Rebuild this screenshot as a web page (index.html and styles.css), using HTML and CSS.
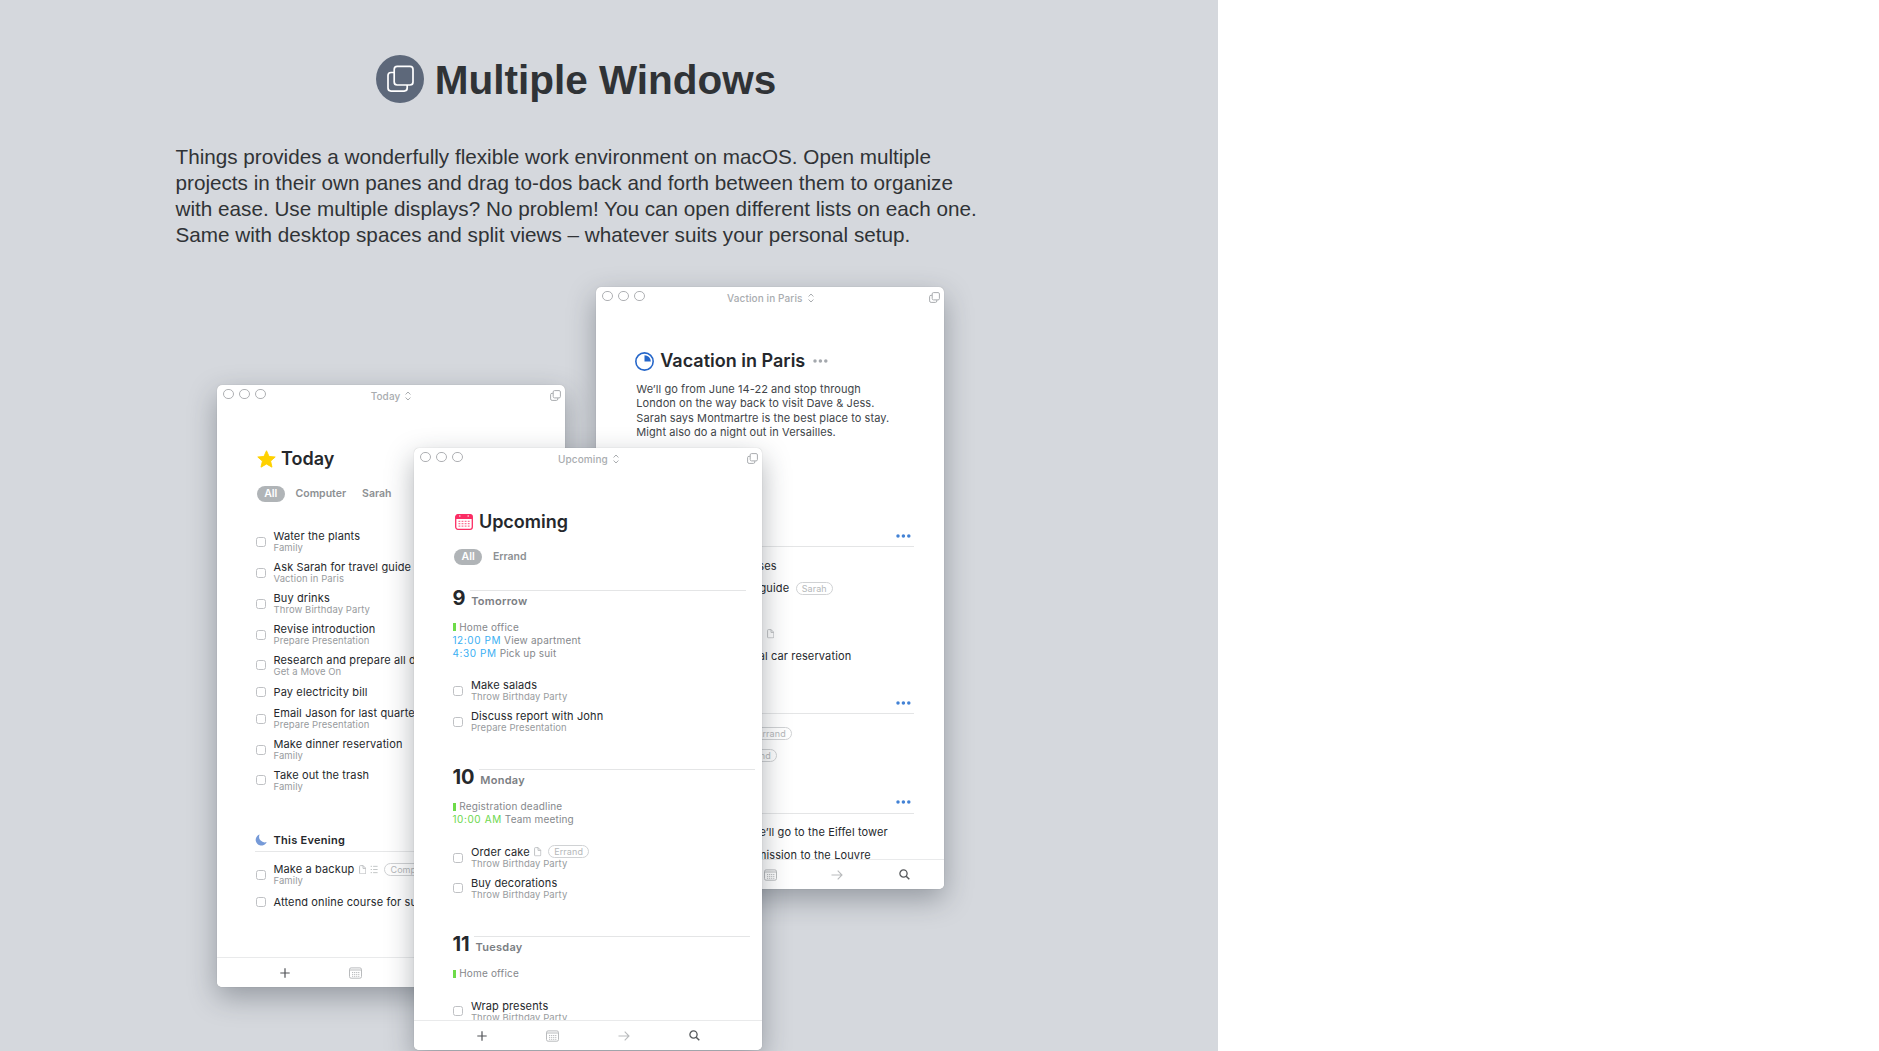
FILE: index.html
```html
<!DOCTYPE html>
<html lang="en">
<head>
<meta charset="utf-8">
<title>Multiple Windows</title>
<link rel="stylesheet" href="styles.css">
</head>
<body>
<svg width="0" height="0" class="defs" aria-hidden="true">
  <symbol id="copy" viewBox="0 0 11 11"><path d="M3.2 3.3H2A1.4 1.4 0 0 0 .6 4.700v4.200A1.500 1.500 0 0 0 2.100 10.400H6.400A1.400 1.400 0 0 0 7.800 9V8" fill="none" stroke="currentColor"/><rect x="3.200" y=".6" width="7.200" height="7.300" rx="1.300" fill="none" stroke="currentColor"/></symbol>
  <symbol id="sort" viewBox="0 0 6 10"><path d="M.6 3.500 3 1l2.400 2.500M.6 6.500 3 9l2.400-2.500" fill="none" stroke="currentColor"/></symbol>
  <symbol id="plus" viewBox="0 0 10 10"><path d="M5 .3v9.400M.3 5h9.400" fill="none" stroke="currentColor" stroke-width="1.200"/></symbol>
  <symbol id="cal" viewBox="0 0 13 12"><rect x=".5" y=".9" width="12" height="10.300" rx="1.600" fill="none" stroke="currentColor"/><path d="M.5 3h12" stroke="currentColor"/><path d="M3 5.500h7.400M3 7.400h7.400M3 9.300h7.400" fill="none" stroke="currentColor" stroke-dasharray="1.200 .85"/></symbol>
  <symbol id="arrow" viewBox="0 0 12 10"><path d="M.5 5H11M6.700.6 11 5 6.700 9.400" fill="none" stroke="currentColor" stroke-width="1.100"/></symbol>
  <symbol id="search" viewBox="0 0 11 11"><circle cx="4.500" cy="4.500" r="3.600" fill="none" stroke="currentColor" stroke-width="1.300"/><path d="m7.200 7.200 3.100 3.100" stroke="currentColor" stroke-width="1.500"/></symbol>
  <symbol id="file" viewBox="0 0 8 10"><path d="M1.500.6h2.900L7.300 3.500v5a.9.9 0 0 1-.9.9H1.500a.9.9 0 0 1-.9-.9v-7a.9.9 0 0 1 .9-.9ZM4.300.6v3h3" fill="none" stroke="currentColor" stroke-width=".9"/></symbol>
  <symbol id="list" viewBox="0 0 8 10"><path d="M.3 1.500h1.500M.3 5h1.500M.3 8.500h1.500M3 1.500h5M3 5h5M3 8.500h5" fill="none" stroke="currentColor" stroke-width=".9"/></symbol>
  <symbol id="dots" viewBox="0 0 15 4"><circle cx="2" cy="2" r="1.750"/><circle cx="7.400" cy="2" r="1.750"/><circle cx="12.800" cy="2" r="1.750"/></symbol>
</svg>

<section class="feature">
  <h1 class="headline">
    <svg class="badge" viewBox="0 0 48 48"><circle cx="24" cy="24" r="24" fill="#5d687a"/><g fill="none" stroke="#fff" stroke-width="1.700"><rect x="18.200" y="11.400" width="18.800" height="18.600" rx="3"/><path d="M18.200 17.500H15a3 3 0 0 0-3 3v12.600a3 3 0 0 0 3 3h13.200a3 3 0 0 0 3-3V30"/></g></svg>
    <span>Multiple Windows</span>
  </h1>
  <p class="intro">Things provides a wonderfully flexible work environment on macOS. Open multiple projects in their own panes and drag to-dos back and forth between them to organize with ease. Use multiple displays? No problem! You can open different lists on each one. Same with desktop spaces and split views – whatever suits your personal setup.</p>

  <article class="window paris">
    <header class="bar"><span class="lights"><i></i><i></i><i></i></span><span class="name">Vaction in Paris <svg class="sort"><use href="#sort"/></svg></span><svg class="copy"><use href="#copy"/></svg></header>
    <div class="body">
      <h2 class="title"><svg class="pie" viewBox="0 0 18 18"><circle cx="9" cy="9" r="8.200" fill="none" stroke="#2566c9" stroke-width="1.500"/><path d="M9 3v6h6a6 6 0 0 0-6-6Z" fill="#2566c9"/></svg><span>Vacation in Paris</span><svg class="dots"><use href="#dots"/></svg></h2>
      <p class="notes">We’ll go from June 14-22 and stop through<br>London on the way back to visit Dave &amp; Jess.<br>Sarah says Montmartre is the best place to stay.<br>Might also do a night out in Versailles.</p>
      <div class="group first"><svg class="dots"><use href="#dots"/></svg></div>
      <ul class="tasks tail">
        <li class="w-a"><b>glasses</b></li>
        <li class="w-b"><b>guide</b><span class="tag">Sarah</span></li>
        <li></li>
        <li class="w-c"><svg class="file"><use href="#file"/></svg></li>
        <li class="w-d"><b>rental car reservation</b></li>
      </ul>
      <div class="group"><svg class="dots"><use href="#dots"/></svg></div>
      <ul class="tasks tail">
        <li class="w-e"><span class="tag">Errand</span></li>
        <li class="w-f"><span class="tag">Errand</span></li>
      </ul>
      <div class="group"><svg class="dots"><use href="#dots"/></svg></div>
      <ul class="tasks tail">
        <li class="w-g"><b>We’ll go to the Eiffel tower</b></li>
        <li class="w-h"><b>Admission to the Louvre</b></li>
      </ul>
    </div>
    <footer class="tools five"><svg class="plus"><use href="#plus"/></svg><svg class="list"><use href="#list"/></svg><svg class="cal"><use href="#cal"/></svg><svg class="arrow"><use href="#arrow"/></svg><svg class="search"><use href="#search"/></svg></footer>
  </article>

  <article class="window today">
    <header class="bar"><span class="lights"><i></i><i></i><i></i></span><span class="name">Today <svg class="sort"><use href="#sort"/></svg></span><svg class="copy"><use href="#copy"/></svg></header>
    <div class="body">
      <h2 class="title"><svg class="star" viewBox="0 0 20 19"><path d="m10 .8 2.700 6 6.500.6-4.900 4.300 1.500 6.400L10 14.800l-5.800 3.300 1.500-6.400L.8 7.400l6.500-.6Z" fill="#ffd100" stroke="#ffd100" stroke-linejoin="round"/></svg><span>Today</span></h2>
      <div class="filters"><span class="on">All</span><span>Computer</span><span>Sarah</span></div>
      <ul class="tasks">
        <li><i></i><div><b>Water the plants</b><small>Family</small></div></li>
        <li><i></i><div><b>Ask Sarah for travel guide</b><small>Vaction in Paris</small></div></li>
        <li><i></i><div><b>Buy drinks</b><small>Throw Birthday Party</small></div></li>
        <li><i></i><div><b>Revise introduction</b><small>Prepare Presentation</small></div></li>
        <li><i></i><div><b>Research and prepare all d</b><small>Get a Move On</small></div></li>
        <li class="single"><i></i><div><b>Pay electricity bill</b></div></li>
        <li><i></i><div><b>Email Jason for last quarter</b><small>Prepare Presentation</small></div></li>
        <li><i></i><div><b>Make dinner reservation</b><small>Family</small></div></li>
        <li><i></i><div><b>Take out the trash</b><small>Family</small></div></li>
      </ul>
      <h3 class="evening"><svg viewBox="0 0 12 12"><path d="M4.600.5A5.700 5.700 0 1 0 11.700 8 5.600 5.600 0 0 1 4.600.5Z" fill="#769ad8"/></svg>This Evening</h3>
      <ul class="tasks">
        <li><i></i><div><b>Make a backup<svg class="file"><use href="#file"/></svg><svg class="list"><use href="#list"/></svg><span class="tag">Computer</span></b><small>Family</small></div></li>
        <li class="single"><i></i><div><b>Attend online course for su</b></div></li>
      </ul>
    </div>
    <footer class="tools"><svg class="plus"><use href="#plus"/></svg><svg class="cal"><use href="#cal"/></svg><svg class="arrow"><use href="#arrow"/></svg><svg class="search"><use href="#search"/></svg></footer>
  </article>

  <article class="window upcoming">
    <header class="bar"><span class="lights"><i></i><i></i><i></i></span><span class="name">Upcoming <svg class="sort"><use href="#sort"/></svg></span><svg class="copy"><use href="#copy"/></svg></header>
    <div class="body">
      <h2 class="title"><svg class="month" viewBox="0 0 18 16"><rect x=".7" y=".7" width="16.600" height="14.600" rx="2.200" fill="#fff" stroke="#fb2d64" stroke-width="1.300"/><path d="M.7 5V2.500A2 2 0 0 1 2.700.5h12.600a2 2 0 0 1 2 2V5Z" fill="#fb2d64"/><path d="M4 2h1.500M12.500 2H14" stroke="#fff"/><path d="M3.500 7.300h11.500M3.500 9.700h11.500M3.500 12.100h11.500" stroke="#fb7296" stroke-width="1.200" stroke-dasharray="1.800 1.300"/></svg><span>Upcoming</span></h2>
      <div class="filters"><span class="on">All</span><span>Errand</span></div>
      <div class="day"><strong>9</strong><span>Tomorrow</span></div>
      <ul class="events">
        <li class="all">Home office</li>
        <li><time>12:00 PM</time> View apartment</li>
        <li><time>4:30 PM</time> Pick up suit</li>
      </ul>
      <ul class="tasks">
        <li><i></i><div><b>Make salads</b><small>Throw Birthday Party</small></div></li>
        <li><i></i><div><b>Discuss report with John</b><small>Prepare Presentation</small></div></li>
      </ul>
      <div class="day"><strong>10</strong><span>Monday</span></div>
      <ul class="events">
        <li class="all">Registration deadline</li>
        <li><time class="green">10:00 AM</time> Team meeting</li>
      </ul>
      <ul class="tasks">
        <li><i></i><div><b>Order cake<svg class="file"><use href="#file"/></svg><span class="tag">Errand</span></b><small>Throw Birthday Party</small></div></li>
        <li><i></i><div><b>Buy decorations</b><small>Throw Birthday Party</small></div></li>
      </ul>
      <div class="day"><strong>11</strong><span>Tuesday</span></div>
      <ul class="events"><li class="all">Home office</li></ul>
      <ul class="tasks">
        <li><i></i><div><b>Wrap presents</b><small>Throw Birthday Party</small></div></li>
      </ul>
    </div>
    <footer class="tools"><svg class="plus"><use href="#plus"/></svg><svg class="cal"><use href="#cal"/></svg><svg class="arrow"><use href="#arrow"/></svg><svg class="search"><use href="#search"/></svg></footer>
  </article>
</section>
</body>
</html>
```
FILE: styles.css
```css
* { box-sizing: border-box; }
body { margin: 0; background: #fff; overflow: hidden; }
ul, h1, h2, h3, p { margin: 0; padding: 0; list-style: none; }
svg { display: block; flex: none; }
.defs { position: absolute; }

.feature {
  position: relative;
  width: 1218px;
  height: 1051px;
  padding: 55px 66px 0 0;
  overflow: hidden;
  background: #d5d8dd;
  color: #303336;
  font-family: "Liberation Sans", Arial, sans-serif;
}
.headline { display: flex; justify-content: center; align-items: center; gap: 11px; height: 48px; font-size: 40.5px; line-height: 48px; }
.headline span { padding-top: 2px; }
.badge { width: 48px; height: 48px; }
.intro { width: 812px; margin: 41px 0 0 175.5px; font-size: 20.7px; line-height: 26px; }

/* Desktop windows */
.window {
  position: absolute;
  display: flex;
  flex-direction: column;
  width: 348px;
  height: 602px;
  overflow: hidden;
  border-radius: 5px;
  background: #fff;
  box-shadow: 0 0 1px rgba(0,0,0,.25), 0 10px 28px rgba(35,45,55,.36);
  font-family: Inter, "Liberation Sans", sans-serif;
  color: #25282c;
}
.paris { left: 596.300px; top: 287px; }
.today { left: 217px; top: 385px; }
.upcoming { left: 414.400px; top: 448px; }

.bar { display: grid; grid-template-columns: 60px 1fr 60px; height: 21.500px; flex: none; align-items: center; color: #a9acaf; }
.lights { display: flex; gap: 5.500px; padding: 0 0 3.500px 6px; }
.lights i { width: 10.500px; height: 10.500px; border: 1px solid #aeb0b3; border-radius: 50%; }
.name { display: flex; justify-content: center; align-items: center; gap: 5px; font-size: 10px; font-weight: 500; letter-spacing: .1px; }
.sort { width: 6px; height: 10px; }
.copy { width: 11px; height: 11px; justify-self: end; margin-right: 4.500px; }

.body { flex: 1; min-height: 0; overflow: hidden; padding: 41.500px 0 0 39px; }
.title { display: flex; align-items: center; height: 22px; font-size: 18px; font-weight: 600; line-height: 22px; white-space: nowrap; }
.pie { width: 19px; height: 19px; margin-right: 6px; }
.star { width: 19px; height: 18px; margin: 0 5px 1px 1px; }
.month { width: 18px; height: 16px; margin: 0 5.500px 0 2px; }
.dots { width: 15px; height: 4px; fill: #4282d5; }
.title .dots { margin-left: 8px; fill: #a4a8ad; }

.filters { display: flex; gap: 11px; margin: 16px 0 0 1px; height: 16px; align-items: center; font-size: 10.500px; font-weight: 600; line-height: 15.500px; color: #8d9093; }
.filters span + span + span { margin-left: 5px; }
.filters .on { width: 27.500px; text-align: center; border-radius: 8px; background: #b0b4b7; color: #fff; }

.tasks li { display: flex; align-items: center; height: 30.800px; white-space: nowrap; }
.tasks .single, .tail li { height: 22.700px; }
.tasks i { flex: none; width: 10px; height: 10px; margin-right: 7.500px; border: 1px solid #bfc1c4; border-radius: 2.500px; }
.tasks b { display: flex; align-items: center; height: 12px; font-size: 11px; font-weight: 400; line-height: 12px; letter-spacing: .13px; }
.tasks small { display: block; font-size: 9.500px; line-height: 11.600px; letter-spacing: .08px; color: #989b9e; }
.file { width: 7.500px; height: 9.500px; margin-left: 4.500px; color: #b5b8ba; }
.list { width: 8px; height: 9px; margin-left: 3.500px; color: #b5b8ba; }
.tag { margin-left: 6.500px; padding: 0 5px; height: 13px; border: 1px solid #d0d2d4; border-radius: 7px; font-size: 9px; line-height: 11px; letter-spacing: .1px; color: #b5b8ba; }

.today .tasks:first-of-type { margin-top: 24.800px; }
.evening { display: flex; align-items: center; gap: 6.500px; height: 24px; margin: 32.500px 0 7.500px -1px; border-bottom: 1px solid #e6e7e8; font-size: 11px; font-weight: 600; letter-spacing: .28px; }
.evening svg { width: 12px; height: 12px; }

.upcoming .filters { margin-bottom: 25px; }
.day { display: flex; height: 31px; margin: 32.200px 0 0 -1px; }
.filters + .day { margin-top: 0; }
.day strong { padding-top: 1px; font-size: 20px; line-height: 15px; font-weight: 700; margin-right: 4.800px; }
.day span { flex: none; width: 276px; padding: 4px 0 0 1px; border-top: 1px solid #e4e5e6; font-size: 11px; font-weight: 600; line-height: 12px; letter-spacing: .27px; color: #7b7e83; }
.events { margin: 0 0 16px -1px; font-size: 10px; line-height: 12.900px; letter-spacing: .18px; color: #85888c; }
.events .all { display: flex; align-items: center; gap: 3px; height: 12.900px; }
.events .all::before { content: ""; width: 2.800px; height: 8px; margin-left: 1px; background: #6edb48; }
time { color: #3aaff3; letter-spacing: .6px; }
.green { color: #6cd74d; }

.notes { margin: 9.500px 0 0 1px; font-size: 11px; line-height: 14.600px; letter-spacing: .07px; color: #414549; white-space: nowrap; }
.group { display: flex; justify-content: flex-end; align-items: flex-end; width: 279px; height: 46.700px; margin-bottom: 7.300px; padding: 0 3px 8.500px 0; border-bottom: 1px solid #e4e5e6; }
.group.first { margin-top: 60.500px; }
.tail li { justify-content: flex-end; }
.w-a { width: 141.500px; }
.w-b { width: 197.500px; }
.w-c { width: 139px; }
.w-d { width: 216px; }
.w-e { width: 156.500px; }
.w-f { width: 141.500px; }
.w-g { width: 252.500px; }
.w-h { width: 235.500px; }

.tools { flex: none; display: grid; grid-template-columns: repeat(4, 71px); height: 30px; padding-left: 32px; border-top: 1px solid #e9eaeb; align-items: center; justify-items: center; color: #b9bbbd; background: #fff; }
.five { grid-template-columns: repeat(5, 67px); padding-left: 6.500px; }
.plus { width: 10px; height: 10px; color: #505357; }
.cal { width: 13px; height: 12px; }
.arrow { width: 12px; height: 10px; }
.search { width: 11px; height: 11px; color: #55585b; }
```
